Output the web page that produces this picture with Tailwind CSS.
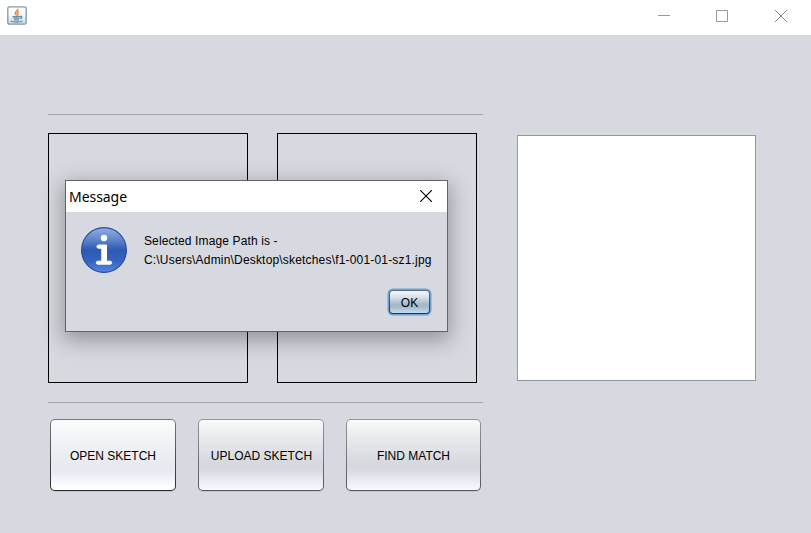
<!DOCTYPE html>
<html lang="en">
<head>
<meta charset="utf-8">
<title>Sketch Match</title>
<script src="https://cdn.jsdelivr.net/npm/@tailwindcss/browser@4"></script>
</head>
<body class="relative flex h-[533px] w-[811px] flex-col overflow-hidden bg-[#d6d9e0] font-['Liberation_Sans',Arial,sans-serif] text-[12px] text-black">
<header class="flex h-[35px] shrink-0 items-start justify-between bg-white pl-[7px] pr-[24px]">
  <svg class="mt-[6px]" width="20" height="19" viewBox="0 0 20 19" fill="none">
    <defs><linearGradient id="jb" x1="0" y1="0" x2="0" y2="1"><stop stop-color="#fff"/><stop offset=".5" stop-color="#f4f5f6"/><stop offset="1" stop-color="#cbd8e0"/></linearGradient></defs>
    <rect x=".8" y=".8" width="18.4" height="17.4" rx="1.7" fill="url(#jb)" stroke="#8299aa" stroke-width="1.3"/>
    <path d="M10.600 2.800c1.200 1.800-2.800 2.700-2.300 4.500.2.900 1.200 1.200.9 2.400M12.200 5.500c-2.200.8-2.300 1.700-1.400 2.500.5.500.1 1.100-.4 1.600" stroke="#e98f4e" stroke-width="1.600"/>
    <path d="M5.500 10.600h7.500M6.300 12.200h6M7 13.800h5M13 10.400c2.400-.6 2.400 1.700-.2 2.300M3.500 15c3 1.300 9 1.300 12 0" stroke="#668eab" stroke-width="1.300"/>
  </svg>
  <div class="flex gap-[46px] pt-[10px] text-[#999]">
    <svg width="12" height="12" fill="none" stroke="currentColor"><path d="M0 5.500h12"/></svg>
    <svg width="12" height="12" fill="none" stroke="currentColor"><path d="M.5.500h11v11H.5z"/></svg>
    <svg class="ml-px" width="12" height="12" fill="none" stroke="#858585"><path d="M0 0l12 12M12 0L0 12"/></svg>
  </div>
</header>
<main class="flex items-start pl-[48px] pt-[79px]">
  <section class="w-[435px]">
    <div class="h-px bg-[#a5a8b1]"></div>
    <div class="mt-[18px] flex gap-[29px]">
      <div class="h-[250px] w-[200px] border border-black"></div>
      <div class="h-[250px] w-[200px] border border-black"></div>
    </div>
    <div class="mt-[19px] h-px bg-[#a5a8b1]"></div>
    <div class="mt-4 flex gap-[22px] pl-[2px]">
      <button class="h-[72px] w-[126px] rounded-[5px] bg-linear-to-b from-[#77797d] to-[#292b30] p-px shadow-[0_1px_0_#c1c4cb]"><span class="flex h-full items-center justify-center whitespace-nowrap rounded-[4px] bg-[linear-gradient(#fbfcfd_0%,#eff1f4_35%,#e6eaf1_65%,#e8ebf2_75%,#fdfeff_95%)] pt-[2px]">OPEN SKETCH</span></button>
      <button class="h-[72px] w-[126px] rounded-[5px] bg-linear-to-b from-[#94969a] to-[#555860] p-px shadow-[0_1px_0_#c1c4cb]"><span class="flex h-full items-center justify-center whitespace-nowrap rounded-[4px] bg-[linear-gradient(#fafafb_0%,#eff0f2_15%,#d6d9df_60%,#d6d9e0_70%,#f5f8ff_98%)] pl-px pt-[2px]">UPLOAD SKETCH</span></button>
      <button class="h-[72px] w-[135px] rounded-[5px] bg-linear-to-b from-[#94969a] to-[#555860] p-px shadow-[0_1px_0_#c1c4cb]"><span class="flex h-full items-center justify-center whitespace-nowrap rounded-[4px] bg-[linear-gradient(#fafafb_0%,#eff0f2_15%,#d6d9df_60%,#d6d9e0_70%,#f5f8ff_98%)] pt-[2px]">FIND MATCH</span></button>
    </div>
  </section>
  <section class="ml-[34px] mt-[21px] h-[246px] w-[239px] border border-[#9297a1] bg-white"></section>
</main>
<div role="dialog" class="absolute left-[65px] top-[180px] flex h-[152px] w-[383px] flex-col border border-[#626468] bg-[#d6d9e0] shadow-[0_6px_20px_2px_rgba(0,0,0,0.32)]">
  <div class="flex h-[31px] shrink-0 items-center justify-between bg-white pl-[3px] pr-[15px]">
    <span class="font-['Noto_Sans','Open_Sans',sans-serif] text-[14px] tracking-[-0.05px]">Message</span>
    <svg class="-mt-px" width="12" height="12" fill="none" stroke="#000" stroke-width="1.100"><path d="M0 0l12 12M12 0L0 12"/></svg>
  </div>
  <div class="flex pl-[14px] pt-[14px]">
    <svg width="48" height="48" viewBox="0 0 48 48">
      <defs><linearGradient id="ib" x1="0" y1="0" x2="0" y2="1"><stop stop-color="#94afdf"/><stop offset=".3" stop-color="#587fc8"/><stop offset=".5" stop-color="#2c5ab2"/><stop offset=".75" stop-color="#3564bf"/><stop offset="1" stop-color="#5586e2"/></linearGradient></defs>
      <circle cx="24" cy="24" r="22.400" fill="url(#ib)" stroke="#234995" stroke-width="1.100"/>
      <circle cx="24" cy="12" r="3.200" fill="#fff"/>
      <path d="M18.500 19h8v16.200h3.700a1.500 1.500 0 0 1 0 3H17.800a1.500 1.500 0 0 1 0-3h4v-13h-3.300a1.600 1.600 0 0 1 0-3.200z" fill="#fff" stroke="#fff" stroke-width="1"/>
    </svg>
    <div class="ml-4 whitespace-nowrap pt-[6px] leading-[19px]">
      <p class="tracking-[0.12px]">Selected Image Path is -</p>
      <p class="tracking-[0.18px]">C:\Users\Admin\Desktop\sketches\f1-001-01-sz1.jpg</p>
    </div>
  </div>
  <div class="flex justify-end pr-[17px] pt-[16px]">
    <button class="h-[24px] w-[41px] rounded-[4px] bg-linear-to-b from-[#536f89] to-[#20364c] p-px shadow-[0_0_0_1.5px_#70a1d0]"><span class="flex h-full items-center justify-center rounded-[3px] bg-[linear-gradient(#f5f8fa_0%,#d5dfe6_30%,#a5b9c9_60%,#a5b9ca_72%,#c5daef_100%)] pt-px">OK</span></button>
  </div>
</div>
</body>
</html>
